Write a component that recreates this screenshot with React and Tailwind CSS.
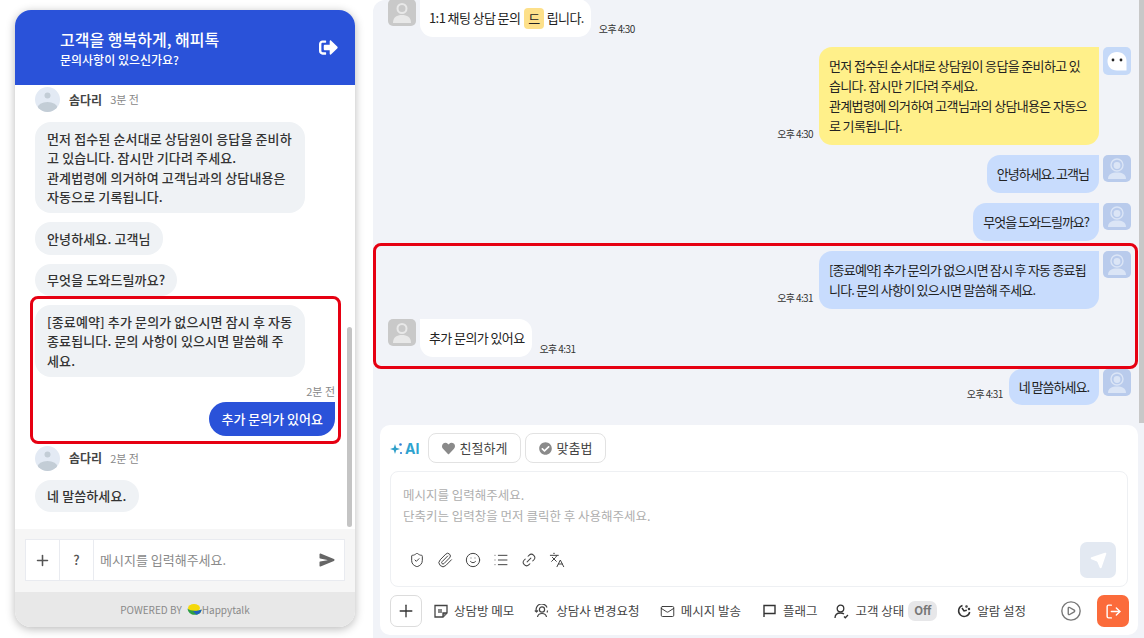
import { FaSignOutAlt, FaHeart, FaCheckCircle } from 'react-icons/fa';
import { IoSend } from 'react-icons/io5';
import {
  Plus, ShieldCheck, Paperclip, Smile, List, Link2, Languages, Mail, CirclePlay, LogOut, Send,
} from 'lucide-react';

const font = { fontFamily: '"Noto Sans CJK KR", "Noto Sans", sans-serif' };

function WidgetAvatar() {
  return (
    <svg width="25" height="25" viewBox="0 0 25 25" className="shrink-0">
      <defs>
        <clipPath id="wa"><circle cx="12.5" cy="12.5" r="12.5" /></clipPath>
      </defs>
      <g clipPath="url(#wa)">
        <rect width="25" height="25" fill="#e3eaf4" />
        <circle cx="12.5" cy="8.5" r="3" fill="#c3cdd6" />
        <ellipse cx="12.5" cy="21" rx="10" ry="6" fill="#c3cdd6" />
      </g>
    </svg>
  );
}

function AgentRow({ time, className = '' }) {
  return (
    <div className={`flex items-center h-[25px] ${className}`}>
      <WidgetAvatar />
      <span className="ml-[9px] text-[12px] font-bold text-[#444]">솜다리</span>
      <span className="ml-2 text-[11px] text-[#888]">{time}</span>
    </div>
  );
}

function WidgetBubble({ children, className = '' }) {
  return (
    <div className={`w-fit max-w-[270px] bg-[#eff2f5] rounded-[16px] px-3 py-[6.5px] text-[13px] leading-[19.5px] tracking-[0.12px] font-medium text-[#333] ${className}`}>
      {children}
    </div>
  );
}

function Widget() {
  return (
    <div className="w-[340px] h-[617px] rounded-[16px] bg-white shadow-[0_2px_10px_rgba(0,0,0,0.28)] flex flex-col overflow-hidden">
      <div className="h-[75px] shrink-0 bg-[#2a52d9] flex items-center pl-[45px] pr-[17px] text-white">
        <div className="flex-1 pt-[1px]">
          <div className="text-[16px] leading-[22px] font-medium">고객을 행복하게, 해피톡</div>
          <div className="text-[12px] leading-[18px] font-medium mt-[1px]">문의사항이 있으신가요?</div>
        </div>
        <FaSignOutAlt className="text-[19px]" />
      </div>
      <div className="relative flex-1 min-h-0 pl-5 pr-5 pt-[2px]">
        <AgentRow time="3분 전" />
        <WidgetBubble className="mt-[10px]">
          먼저 접수된 순서대로 상담원이 응답을 준비하고 있습니다. 잠시만 기다려 주세요.
          <br />
          관계법령에 의거하여 고객님과의 상담내용은 자동으로 기록됩니다.
        </WidgetBubble>
        <WidgetBubble className="mt-[9px]">안녕하세요. 고객님</WidgetBubble>
        <WidgetBubble className="mt-[9px]">무엇을 도와드릴까요?</WidgetBubble>
        <WidgetBubble className="mt-[9px]">
          [종료예약] 추가 문의가 없으시면 잠시 후 자동 종료됩니다. 문의 사항이 있으시면 말씀해 주세요.
        </WidgetBubble>
        <div className="mt-[6px] text-right text-[11px] leading-[16px] text-[#888]">2분 전</div>
        <div className="flex justify-end mt-[3px]">
          <div className="bg-[#2a52d9] text-white rounded-[17px] rounded-tr-none h-[34px] leading-[34px] px-3 text-[13px] font-medium">
            추가 문의가 있어요
          </div>
        </div>
        <AgentRow time="2분 전" className="mt-[10px]" />
        <WidgetBubble className="mt-[9px]">네 말씀하세요.</WidgetBubble>
        <div className="absolute right-[3px] top-[242px] w-[5px] h-[200px] rounded-full bg-[#c4c4c4]" />
      </div>
      <div className="h-[63px] shrink-0 bg-[#f6f6f6] px-[10px] pt-[10px]">
        <div className="h-[42px] bg-white border border-[#e9ebf0] flex items-center">
          <div className="w-[34px] h-full flex items-center justify-center border-r border-[#e9ebf0]">
            <Plus size={17} strokeWidth={2.2} className="text-[#555]" />
          </div>
          <div className="w-[34px] h-full flex items-center justify-center border-r border-[#e9ebf0] text-[13px] font-medium text-[#555]">?</div>
          <div className="flex-1 pl-[6px] text-[13px] text-[#8a8a8a]">메시지를 입력해주세요.</div>
          <IoSend className="text-[16px] text-[#666] mr-[9px]" />
        </div>
      </div>
      <div className="h-[35px] shrink-0 bg-[#e8e8e8] flex items-center justify-center text-[10px] text-[#8a8a8a]">
        <span>POWERED BY</span>
        <svg width="15" height="12" viewBox="0 0 15 12" className="ml-[5px]">
          <ellipse cx="7" cy="4" rx="6" ry="4" fill="#f5d90a" />
          <path d="M0.5 4.5 C3 7 10 7.5 14.5 5.5 C14.5 9 11 11 7.5 10.8 C4 10.8 1 8.5 0.5 4.5Z" fill="#2f9e44" />
          <path d="M6 7 C9 7.2 12.5 6.6 14.5 5.5 C14.5 8 12 10.5 9 10.6Z" fill="#1f5fbf" />
        </svg>
        <span className="text-[10px]">Happytalk</span>
      </div>
    </div>
  );
}

function CustomerAvatar() {
  return (
    <svg width="28" height="27" viewBox="0 0 28 27" className="shrink-0">
      <rect width="28" height="27" rx="5" fill="#c9c9c9" />
      <circle cx="14" cy="9.5" r="4.5" fill="none" stroke="#e8e8e8" strokeWidth="2" />
      <path d="M5 24 C5 18 9 16 14 16 C19 16 23 18 23 24Z" fill="#e8e8e8" />
    </svg>
  );
}

function AgentAvatar() {
  return (
    <svg width="28" height="27" viewBox="0 0 28 27" className="shrink-0">
      <rect width="28" height="27" rx="5" fill="#b9cbec" />
      <circle cx="14" cy="10" r="6" fill="none" stroke="#dbe5f6" strokeWidth="1.4" />
      <circle cx="14" cy="10.5" r="3.4" fill="#dbe5f6" />
      <path d="M5 24 C5 19 9 17.5 14 17.5 C19 17.5 23 19 23 24Z" fill="#dbe5f6" />
    </svg>
  );
}

function BotAvatar() {
  return (
    <svg width="28" height="28" viewBox="0 0 28 28" className="shrink-0">
      <rect width="28" height="28" rx="5" fill="#c5d9f8" />
      <path d="M14 5 C20 5 23.5 9 23.5 14 C23.5 18 23.5 21.5 23.5 23.5 C20 23.5 17 23.5 14 23.5 C8 23.5 4.5 19.5 4.5 14 C4.5 9 8 5 14 5Z" fill="#fff" />
      <circle cx="10" cy="13" r="1.4" fill="#222" />
      <circle cx="18" cy="13" r="1.4" fill="#222" />
    </svg>
  );
}

function Time({ children }) {
  return <span className="text-[10px] leading-[14px] tracking-[-0.6px] text-[#333] shrink-0">{children}</span>;
}

const chatText = 'text-[13px] leading-[20px] text-[#222]';

function AgentMessage({ time, avatar, color = 'bg-[#c8dcfd]', width, tracking = 'tracking-[-0.65px]', pad = 'py-[9px]', className = '', children }) {
  return (
    <div className={`flex justify-end items-start ${className}`}>
      <div className="flex items-end">
        <span className="mr-[6px] mb-[2px]"><Time>{time}</Time></span>
        <div className={`${color} ${width} ${chatText} ${tracking} ${pad} rounded-[13px] rounded-tr-none px-[10px]`}>
          {children}
        </div>
      </div>
      <div className="ml-[4px]">{avatar || <AgentAvatar />}</div>
    </div>
  );
}

function CustomerMessage({ time, className = '', children }) {
  return (
    <div className={`flex items-start ${className}`}>
      <CustomerAvatar />
      <div className={`ml-[4px] bg-white rounded-[13px] rounded-tl-none pl-[9px] pr-[7px] py-[9px] tracking-[-0.6px] ${chatText}`}>
        {children}
      </div>
      <span className="ml-[8px] self-end -mb-[1px]"><Time>{time}</Time></span>
    </div>
  );
}

function ToolItem({ icon, children, className = '' }) {
  return (
    <div className={`flex items-center gap-[6px] text-[12.5px] text-[#444] ${className}`}>
      {icon}
      <span>{children}</span>
    </div>
  );
}

function Composer() {
  const toolIcon = 'text-[#444]';
  return (
    <div className="ml-[7px] mr-[6px] h-[210px] bg-white rounded-[10px] px-[10px] pt-[8px]">
      <div className="flex items-center h-[30px]">
        <svg width="13" height="13" viewBox="0 0 13 13" className="mt-[1px]">
          <path d="M5 2 L6.2 5.8 L10 7 L6.2 8.2 L5 12 L3.8 8.2 L0 7 L3.8 5.8Z" fill="#2f9fc9" />
          <circle cx="10.5" cy="2.5" r="1.3" fill="#2f7fd9" />
          <circle cx="11" cy="11" r="1.1" fill="#2f7fd9" />
        </svg>
        <span className="ml-[2px] w-[21px] text-[14px] font-bold text-[#2fa3cf]" style={{ fontFamily: 'Inter, sans-serif' }}>AI</span>
        <button className="ml-[2px] h-[30px] w-[93px] rounded-[8px] border border-[#e2e2e2] flex items-center justify-center gap-[5px] text-[13px] text-[#444] bg-white">
          <FaHeart className="text-[#8a8a8a] text-[13px]" />친절하게
        </button>
        <button className="ml-[4px] h-[30px] w-[81px] rounded-[8px] border border-[#e2e2e2] flex items-center justify-center gap-[5px] text-[13px] text-[#444] bg-white">
          <FaCheckCircle className="text-[#8a8a8a] text-[13px]" />맞춤법
        </button>
      </div>
      <div className="relative mt-[8px] h-[116px] rounded-[8px] border border-[#eef0f3] pl-[12px] pt-[12px] text-[12.5px] leading-[21px] text-[#aeaeae]">
        <div>메시지를 입력해주세요.</div>
        <div>단축키는 입력창을 먼저 클릭한 후 사용해주세요.</div>
        <div className="absolute left-[18px] bottom-[18px] flex items-center gap-[12px]">
          <ShieldCheck size={16} strokeWidth={1.5} className={toolIcon} />
          <Paperclip size={16} strokeWidth={1.5} className={toolIcon} />
          <Smile size={16} strokeWidth={1.5} className={toolIcon} />
          <List size={16} strokeWidth={1.5} className={toolIcon} />
          <Link2 size={16} strokeWidth={1.5} className={`${toolIcon} -rotate-45`} />
          <Languages size={16} strokeWidth={1.5} className={toolIcon} />
        </div>
        <div className="absolute right-[11px] bottom-[8px] w-[36px] h-[36px] rounded-[7px] bg-[#e3e9f2] flex items-center justify-center">
          <Send size={17} fill="#fff" className="text-white" />
        </div>
      </div>
      <div className="flex items-center mt-[8px] h-[32px]">
        <div className="w-[32px] h-[32px] rounded-[7px] border border-[#dcdcdc] flex items-center justify-center">
          <Plus size={20} strokeWidth={1.6} className="text-[#333]" />
        </div>
        <ToolItem className="ml-[12px]" icon={
          <svg width="14" height="14" viewBox="0 0 14 14" fill="none" stroke="#444" strokeWidth="1.3">
            <path d="M1 1.5 H13 V9 L9 13 H1Z" />
            <path d="M9 13 V9 H13" fill="#888" />
            <rect x="4" y="5" width="4" height="4" fill="#888" stroke="none" />
          </svg>
        }>상담방 메모</ToolItem>
        <ToolItem className="ml-[20px]" icon={
          <svg width="16" height="14" viewBox="0 0 16 14" fill="none" stroke="#444" strokeWidth="1.2">
            <circle cx="8" cy="5.5" r="2.6" />
            <path d="M3.5 13 C4 10 6 9.5 8 9.5 C10 9.5 12 10 12.5 13" />
            <path d="M2.5 7.5 A5.6 5.6 0 0 1 13 3.5" />
            <path d="M13.5 6.5 A5.6 5.6 0 0 1 13 8.5" />
            <path d="M0.8 6.5 L2.5 8 L4 6.5" />
          </svg>
        }>상담사 변경요청</ToolItem>
        <ToolItem className="ml-[20px]" icon={<Mail size={15} strokeWidth={1.5} className="text-[#333]" />}>메시지 발송</ToolItem>
        <ToolItem className="ml-[22px]" icon={
          <svg width="13" height="14" viewBox="0 0 13 14" fill="none" stroke="#333" strokeWidth="1.4" className="mr-[1px]">
            <path d="M1 13 V1.5 H12 V9.5 H1" />
          </svg>
        }>플래그</ToolItem>
        <ToolItem className="ml-[17px]" icon={
          <svg width="15" height="15" viewBox="0 0 15 15" fill="none" stroke="#333" strokeWidth="1.3">
            <circle cx="6.5" cy="4.5" r="3.3" />
            <path d="M1 14 C1 10.5 3.5 9 6.5 9 C8 9 9 9.3 10 10" />
            <path d="M10 12.5 L11.3 13.8 L14 11" />
          </svg>
        }>고객 상태</ToolItem>
        <span className="ml-[4px] w-[29px] h-[20px] rounded-[7px] bg-[#e7e7e9] flex items-center justify-center text-[11.5px] font-bold text-[#777]">Off</span>
        <ToolItem className="ml-[20px]" icon={
          <svg width="14" height="14" viewBox="0 0 14 14" fill="none" stroke="#333" strokeWidth="1.5">
            <path d="M5.5 1.5 A5.6 5.6 0 1 0 12.7 8" />
            <path d="M5 4 L7 7 L9.8 6.2" />
            <circle cx="9.5" cy="2.5" r="0.5" />
            <circle cx="12" cy="5" r="0.5" />
          </svg>
        }>알람 설정</ToolItem>
        <CirclePlay size={22} strokeWidth={1.5} className="ml-auto mr-[15px] text-[#777]" />
        <div className="w-[32px] h-[32px] -mr-[1px] rounded-[7px] bg-[#fb6b3b] flex items-center justify-center">
          <LogOut size={17} strokeWidth={2} className="text-white" />
        </div>
      </div>
    </div>
  );
}

function AgentConsole() {
  return (
    <div className="relative w-[771px] h-[638px] bg-[#f1f3f8] rounded-tl-[12px] overflow-hidden">
      <div className="h-[425px] pl-[15px] pr-[13px] overflow-hidden">
        <CustomerMessage time="오후 4:30" className="-mt-[1px]">
          <span className="flex items-center h-[20px]">
            1:1 채팅 상담 문의
            <span className="ml-[4px] mr-[3px] px-[4px] h-[21px] leading-[21px] rounded-[4px] bg-[#fde08a]">드</span>
            립니다.
          </span>
        </CustomerMessage>
        <AgentMessage time="오후 4:30" avatar={<BotAvatar />} color="bg-[#fff08a]" width="w-[280px]" className="mt-[10px]">
          먼저 접수된 순서대로 상담원이 응답을 준비하고 있습니다. 잠시만 기다려 주세요.
          <br />
          관계법령에 의거하여 고객님과의 상담내용은 자동으로 기록됩니다.
        </AgentMessage>
        <AgentMessage tracking="tracking-[-1px]" className="mt-[10px]">안녕하세요. 고객님</AgentMessage>
        <AgentMessage tracking="tracking-[-1px]" className="mt-[10px]">무엇을 도와드릴까요?</AgentMessage>
        <AgentMessage time="오후 4:31" width="w-[280px]" tracking="tracking-[-0.78px]" className="mt-[10px]">
          [종료예약] 추가 문의가 없으시면 잠시 후 자동 종료됩니다. 문의 사항이 있으시면 말씀해 주세요.
        </AgentMessage>
        <CustomerMessage time="오후 4:31" className="mt-[10px]">추가 문의가 있어요</CustomerMessage>
        <AgentMessage time="오후 4:31" tracking="tracking-[-1px]" pad="py-[8px]" className="mt-[12px]">네 말씀하세요.</AgentMessage>
      </div>
      <Composer />
      <div className="absolute right-0 top-0 w-[5px] h-[423px] bg-[#c8c8c8]" />
    </div>
  );
}

export default function App() {
  return (
    <div className="relative w-[1144px] h-[638px] bg-white flex overflow-hidden" style={font}>
      <div className="w-[373px] shrink-0 pl-[15px] pt-[10px]">
        <Widget />
      </div>
      <AgentConsole />
      {/* red highlight boxes sit over the chats */}
      <div className="absolute left-[30px] top-[296px] w-[311px] h-[148px] rounded-[8px] border-[3px] border-[#e60012]" />
      <div className="absolute left-[373px] top-[243px] w-[765px] h-[126px] rounded-[8px] border-[3px] border-[#e60012]" />
    </div>
  );
}
